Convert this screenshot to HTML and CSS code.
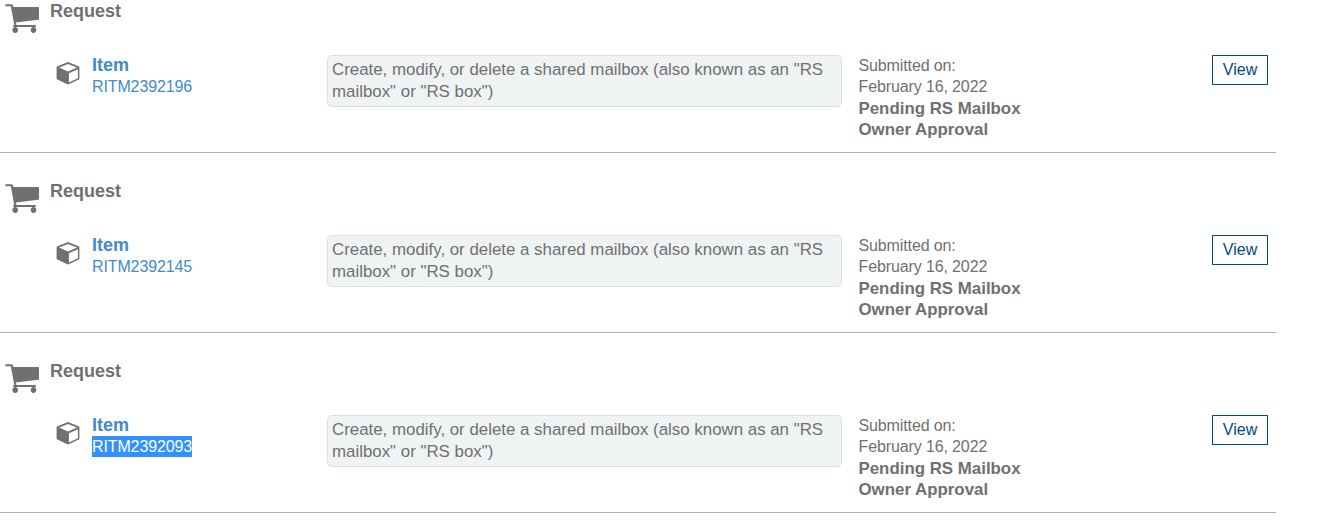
FILE: index.html
```
<!DOCTYPE html>
<html lang="en">
<head>
<meta charset="utf-8">
<title>My Requests</title>
<link rel="stylesheet" href="styles.css">
</head>
<body>
<svg width="0" height="0" class="defs" aria-hidden="true">
  <symbol id="cart" viewBox="0 0 36 32">
    <path d="M1 0.2H6.6Q7.4 .2 7.7 1L8.4 3H33.2Q34 3 34 3.8V14.9Q34 15.7 33.2 15.8L11 18.4L11.4 20.9H30.8V23H8.3V20.9H9.3L5.8 2.2H1Q.3 2.2 .3 1.2Q.3 .2 1 .2Z"/>
    <circle cx="10.2" cy="26.1" r="2.8"/><circle cx="28.5" cy="26.1" r="2.8"/>
    <path d="M9.1 22H11.3V26H9.1ZM27.4 22H29.6V26H27.4Z"/>
  </symbol>
  <symbol id="cube" viewBox="0 0 24 24">
    <path fill-rule="evenodd" d="M12 0.1L22.6 4.3Q23.4 4.7 23.4 5.6V16.4Q23.4 17.2 22.7 17.6L12.7 22.3Q12 22.6 11.3 22.3L1.3 17.6Q.6 17.2 .6 16.4V5.6Q.6 4.7 1.4 4.3ZM12 1.9L3 5.5L12 9.5L21 5.5ZM12.9 11.2V20.4L21.9 16.3V7.2Z"/>
  </symbol>
</svg>
<main class="requests">
  <section class="request">
    <header class="request-head"><svg class="cart"><use href="#cart"/></svg><h2 class="request-title">Request</h2></header>
    <div class="item">
      <svg class="cube"><use href="#cube"/></svg>
      <div class="item-id"><a class="item-label">Item</a><a class="number">RITM2392196</a></div>
      <p class="description">Create, modify, or delete a shared mailbox (also known as an "RS<br>mailbox" or "RS box")</p>
      <div class="status"><span>Submitted on:</span><span>February 16, 2022</span><b>Pending RS Mailbox</b><b>Owner Approval</b></div>
      <button class="view">View</button>
    </div>
  </section>
  <section class="request">
    <header class="request-head"><svg class="cart"><use href="#cart"/></svg><h2 class="request-title">Request</h2></header>
    <div class="item">
      <svg class="cube"><use href="#cube"/></svg>
      <div class="item-id"><a class="item-label">Item</a><a class="number">RITM2392145</a></div>
      <p class="description">Create, modify, or delete a shared mailbox (also known as an "RS<br>mailbox" or "RS box")</p>
      <div class="status"><span>Submitted on:</span><span>February 16, 2022</span><b>Pending RS Mailbox</b><b>Owner Approval</b></div>
      <button class="view">View</button>
    </div>
  </section>
  <section class="request">
    <header class="request-head"><svg class="cart"><use href="#cart"/></svg><h2 class="request-title">Request</h2></header>
    <div class="item">
      <svg class="cube"><use href="#cube"/></svg>
      <div class="item-id"><a class="item-label">Item</a><a class="number selected">RITM2392093</a></div>
      <p class="description">Create, modify, or delete a shared mailbox (also known as an "RS<br>mailbox" or "RS box")</p>
      <div class="status"><span>Submitted on:</span><span>February 16, 2022</span><b>Pending RS Mailbox</b><b>Owner Approval</b></div>
      <button class="view">View</button>
    </div>
  </section>
</main>
</body>
</html>
```
FILE: styles.css
```
* { box-sizing: border-box; }
body {
  margin: 0;
  background: #fff;
  color: #707070;
  font: 16px/21.4px "Liberation Sans", Arial, sans-serif;
  overflow: hidden;
}
.defs { display: block; width: 0; height: 0; }
.requests { width: 1276px; }
.request {
  height: 180px;
  padding-top: 27px;
  border-bottom: 1px solid #b0b0b0;
}
.request:first-child { height: 153px; padding-top: 0; }
.request-head { display: flex; height: 55px; padding-left: 5px; }
.cart { width: 36px; height: 32px; margin-top: 4px; fill: #707070; }
.request-title {
  margin: 0 0 0 9px;
  font-size: 18px;
  line-height: 22px;
}
.item {
  display: grid;
  grid-template-columns: 36px 235px 515px 16.5px 353.5px 56px;
  align-items: start;
  padding-left: 56px;
}
.cube { width: 24px; height: 24px; margin-top: 7px; fill: #707070; }
.item-id { display: flex; flex-direction: column; align-items: flex-start; color: #428bca; }
.item-label { font-size: 18px; font-weight: bold; line-height: 21px; }
.number { line-height: 21px; letter-spacing: -0.12px; }
.selected { background: #3390ff; color: #fff; }
.description {
  height: 52px;
  margin: 0;
  padding: 3px 4px;
  border: 1px solid #dadfdf;
  border-radius: 5px;
  background: #eff3f4;
  font-size: 16.86px;
  line-height: 22px;
  white-space: nowrap;
}
.status { grid-column: 5; display: flex; flex-direction: column; letter-spacing: -0.12px; }
.status b { font-size: 16.88px; letter-spacing: 0; }
.view {
  width: 56px;
  height: 30px;
  padding: 0;
  border: 1px solid #004b85;
  background: #fff;
  color: #004b85;
  font: 16px/26px "Liberation Sans", Arial, sans-serif;
}
```
